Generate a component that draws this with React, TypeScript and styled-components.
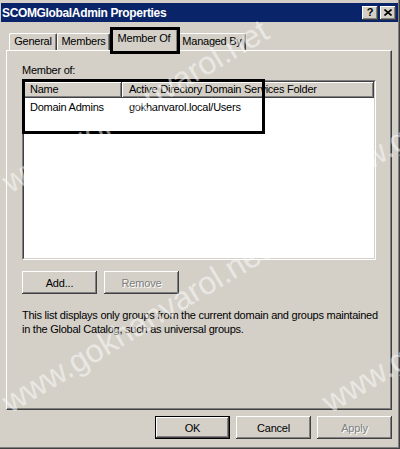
import React from "react";
import styled, { createGlobalStyle, css } from "styled-components";

const FACE = "#d4d0c8";
const SHADOW = "#808080";
const DARK = "#404040";
const HI = "#ffffff";

const Global = createGlobalStyle`
  html, body { margin: 0; padding: 0; background: ${FACE}; }
  body { font-family: "Liberation Sans", Arial, sans-serif; font-size: 11px; color: #000; }
  * { box-sizing: border-box; }
`;

const Window = styled.div`
  position: relative;
  width: 400px;
  height: 449px;
  background: ${FACE};
  padding: 3px 2px 0 1px;
  overflow: hidden;
  display: flex;
  flex-direction: column;
  box-shadow: inset -1px -1px ${DARK}, inset -2px -2px ${SHADOW};
`;

const TitleBar = styled.div`
  height: 19px;
  background: #0a246a;
  display: flex;
  align-items: center;
  padding: 0 2px 0 1px;
`;

const TitleText = styled.div`
  flex: 1;
  color: #fff;
  font-weight: bold;
  font-size: 12px;
  line-height: 14px;
  letter-spacing: -0.35px;
  white-space: nowrap;
`;

const raised = css`
  background: ${FACE};
  box-shadow: inset -1px -1px ${DARK}, inset 1px 1px ${HI}, inset -2px -2px ${SHADOW},
    inset 2px 2px ${FACE};
`;

const CaptionButton = styled.div<{ $gap?: number }>`
  ${raised};
  width: 16px;
  height: 14px;
  margin-left: ${(p) => p.$gap ?? 0}px;
  display: flex;
  align-items: center;
  justify-content: center;
  font-weight: bold;
  font-size: 11px;
  line-height: 12px;
  padding-bottom: 1px;
`;

const Body = styled.div`
  display: flex;
  flex-direction: column;
  padding: 7px 6px 0 5px;
`;

const TabStrip = styled.div`
  height: 21px;
  display: flex;
  align-items: flex-end;
  padding-left: 3px;
  position: relative;
  z-index: 1;
`;

const Tab = styled.div<{ $active?: boolean; $w: number }>`
  width: ${(p) => p.$w}px;
  height: ${(p) => (p.$active ? 22 : 17)}px;
  margin-bottom: ${(p) => (p.$active ? -1 : 0)}px;
  padding-top: ${(p) => (p.$active ? 2 : 1)}px;
  background: ${FACE};
  border-top: 1px solid ${HI};
  border-left: 1px solid ${HI};
  border-right: 1px solid ${DARK};
  border-radius: 2px 2px 0 0;
  box-shadow: inset -1px 0 ${SHADOW};
  text-align: center;
  line-height: 13px;
  letter-spacing: -0.25px;
  white-space: nowrap;
`;

const Panel = styled.div`
  height: 360px;
  background: ${FACE};
  border-top: 1px solid ${HI};
  border-left: 1px solid ${HI};
  border-right: 1px solid ${DARK};
  border-bottom: 1px solid ${DARK};
  box-shadow: inset -1px -1px ${SHADOW};
  padding: 13px 15px 0 15px;
  display: flex;
  flex-direction: column;
`;

const Label = styled.div`
  line-height: 13px;
  letter-spacing: -0.25px;
`;

const ListBox = styled.div`
  margin-top: 3px;
  height: 180px;
  border: 1px solid;
  border-color: ${SHADOW} ${HI} ${HI} ${SHADOW};
`;

const ListInner = styled.div`
  height: 100%;
  background: #fff;
  border: 1px solid;
  border-color: ${DARK} ${FACE} ${FACE} ${DARK};
`;

const HeaderRow = styled.div`
  display: flex;
  height: 16px;
`;

const HeaderCell = styled.div<{ $w?: number; $pad: number }>`
  ${(p) => (p.$w ? `width: ${p.$w}px;` : "flex: 1;")}
  background: ${FACE};
  box-shadow: inset -1px -1px ${DARK}, inset 1px 1px ${HI}, inset -2px -2px ${SHADOW};
  padding: 1px 0 0 ${(p) => p.$pad}px;
  line-height: 13px;
  letter-spacing: -0.25px;
  white-space: nowrap;
  overflow: hidden;
`;

const Row = styled.div`
  display: flex;
  height: 18px;
`;

const Cell = styled.div<{ $w?: number; $pad: number }>`
  ${(p) => (p.$w ? `width: ${p.$w}px;` : "flex: 1;")}
  padding: 3px 0 0 ${(p) => p.$pad}px;
  line-height: 13px;
  letter-spacing: -0.25px;
  white-space: nowrap;
`;

const ButtonRow = styled.div<{ $end?: boolean; $gap: number; $top: number }>`
  display: flex;
  justify-content: ${(p) => (p.$end ? "flex-end" : "flex-start")};
  gap: ${(p) => p.$gap}px;
  margin-top: ${(p) => p.$top}px;
`;

const PushButton = styled.button<{ $default?: boolean }>`
  ${raised};
  width: 75px;
  height: 23px;
  border: none;
  padding: 0;
  font-family: "Liberation Sans", Arial, sans-serif;
  font-size: 11px;
  letter-spacing: -0.2px;
  color: #000;
  ${(p) =>
    p.$default &&
    css`
      border: 1px solid #000;
      box-shadow: inset -1px -1px ${DARK}, inset 1px 1px ${HI}, inset -2px -2px ${SHADOW};
    `}
  &:disabled {
    color: ${SHADOW};
    text-shadow: 1px 1px ${HI};
  }
`;

const Description = styled.div`
  margin-top: 14px;
  line-height: 14px;
  letter-spacing: -0.25px;
  white-space: nowrap;
`;

const Annotation = styled.div<{ $x: number; $y: number; $w: number; $h: number }>`
  position: absolute;
  left: ${(p) => p.$x}px;
  top: ${(p) => p.$y}px;
  width: ${(p) => p.$w}px;
  height: ${(p) => p.$h}px;
  border: 3px solid #000;
  pointer-events: none;
  z-index: 5;
`;

const Watermark = styled.span<{ $x: number; $y: number }>`
  position: absolute;
  left: ${(p) => p.$x}px;
  top: ${(p) => p.$y - 27}px;
  font-family: "Liberation Sans", Arial, sans-serif;
  font-size: 32px;
  line-height: 32px;
  color: rgba(255, 255, 255, 0.5);
  transform: rotate(-31deg);
  transform-origin: 0 100%;
  white-space: nowrap;
  pointer-events: none;
  z-index: 6;
`;

const CloseGlyph = () => (
  <svg width="8" height="7" viewBox="0 0 8 7">
    <path d="M0.5 0.5 L7.5 6.5 M7.5 0.5 L0.5 6.5" stroke="#000" strokeWidth="1.6" fill="none" />
  </svg>
);

export default function App() {
  return (
    <>
      <Global />
      <Window>
        <TitleBar>
          <TitleText>SCOMGlobalAdmin Properties</TitleText>
          <CaptionButton>?</CaptionButton>
          <CaptionButton $gap={2}>
            <CloseGlyph />
          </CaptionButton>
        </TitleBar>
        <Body>
          <TabStrip>
            <Tab $w={48}>General</Tab>
            <Tab $w={53}>Members</Tab>
            <Tab $w={68} $active>
              Member Of
            </Tab>
            <Tab $w={68}>Managed By</Tab>
          </TabStrip>
          <Panel>
            <Label>Member of:</Label>
            <ListBox>
              <ListInner>
                <HeaderRow>
                  <HeaderCell $w={98} $pad={6}>
                    Name
                  </HeaderCell>
                  <HeaderCell $pad={7}>Active Directory Domain Services Folder</HeaderCell>
                </HeaderRow>
                <Row>
                  <Cell $w={98} $pad={6}>
                    Domain Admins
                  </Cell>
                  <Cell $pad={7}>gokhanvarol.local/Users</Cell>
                </Row>
              </ListInner>
            </ListBox>
            <ButtonRow $gap={7} $top={11}>
              <PushButton>Add...</PushButton>
              <PushButton disabled>Remove</PushButton>
            </ButtonRow>
            <Description>
              This list displays only groups from the current domain and groups maintained
              <br />
              in the Global Catalog, such as universal groups.
            </Description>
          </Panel>
          <ButtonRow $end $gap={6} $top={6}>
            <PushButton $default>OK</PushButton>
            <PushButton>Cancel</PushButton>
            <PushButton disabled>Apply</PushButton>
          </ButtonRow>
        </Body>
        <Annotation $x={22} $y={79} $w={243} $h={55} />
        <Annotation $x={110} $y={27} $w={70} $h={27} />
        <Watermark $x={13} $y={193}>www.gokhanvarol.net</Watermark>
        <Watermark $x={333} $y={193}>www.gokhanvarol.net</Watermark>
        <Watermark $x={13} $y={413}>www.gokhanvarol.net</Watermark>
        <Watermark $x={333} $y={413}>www.gokhanvarol.net</Watermark>
      </Window>
    </>
  );
}
